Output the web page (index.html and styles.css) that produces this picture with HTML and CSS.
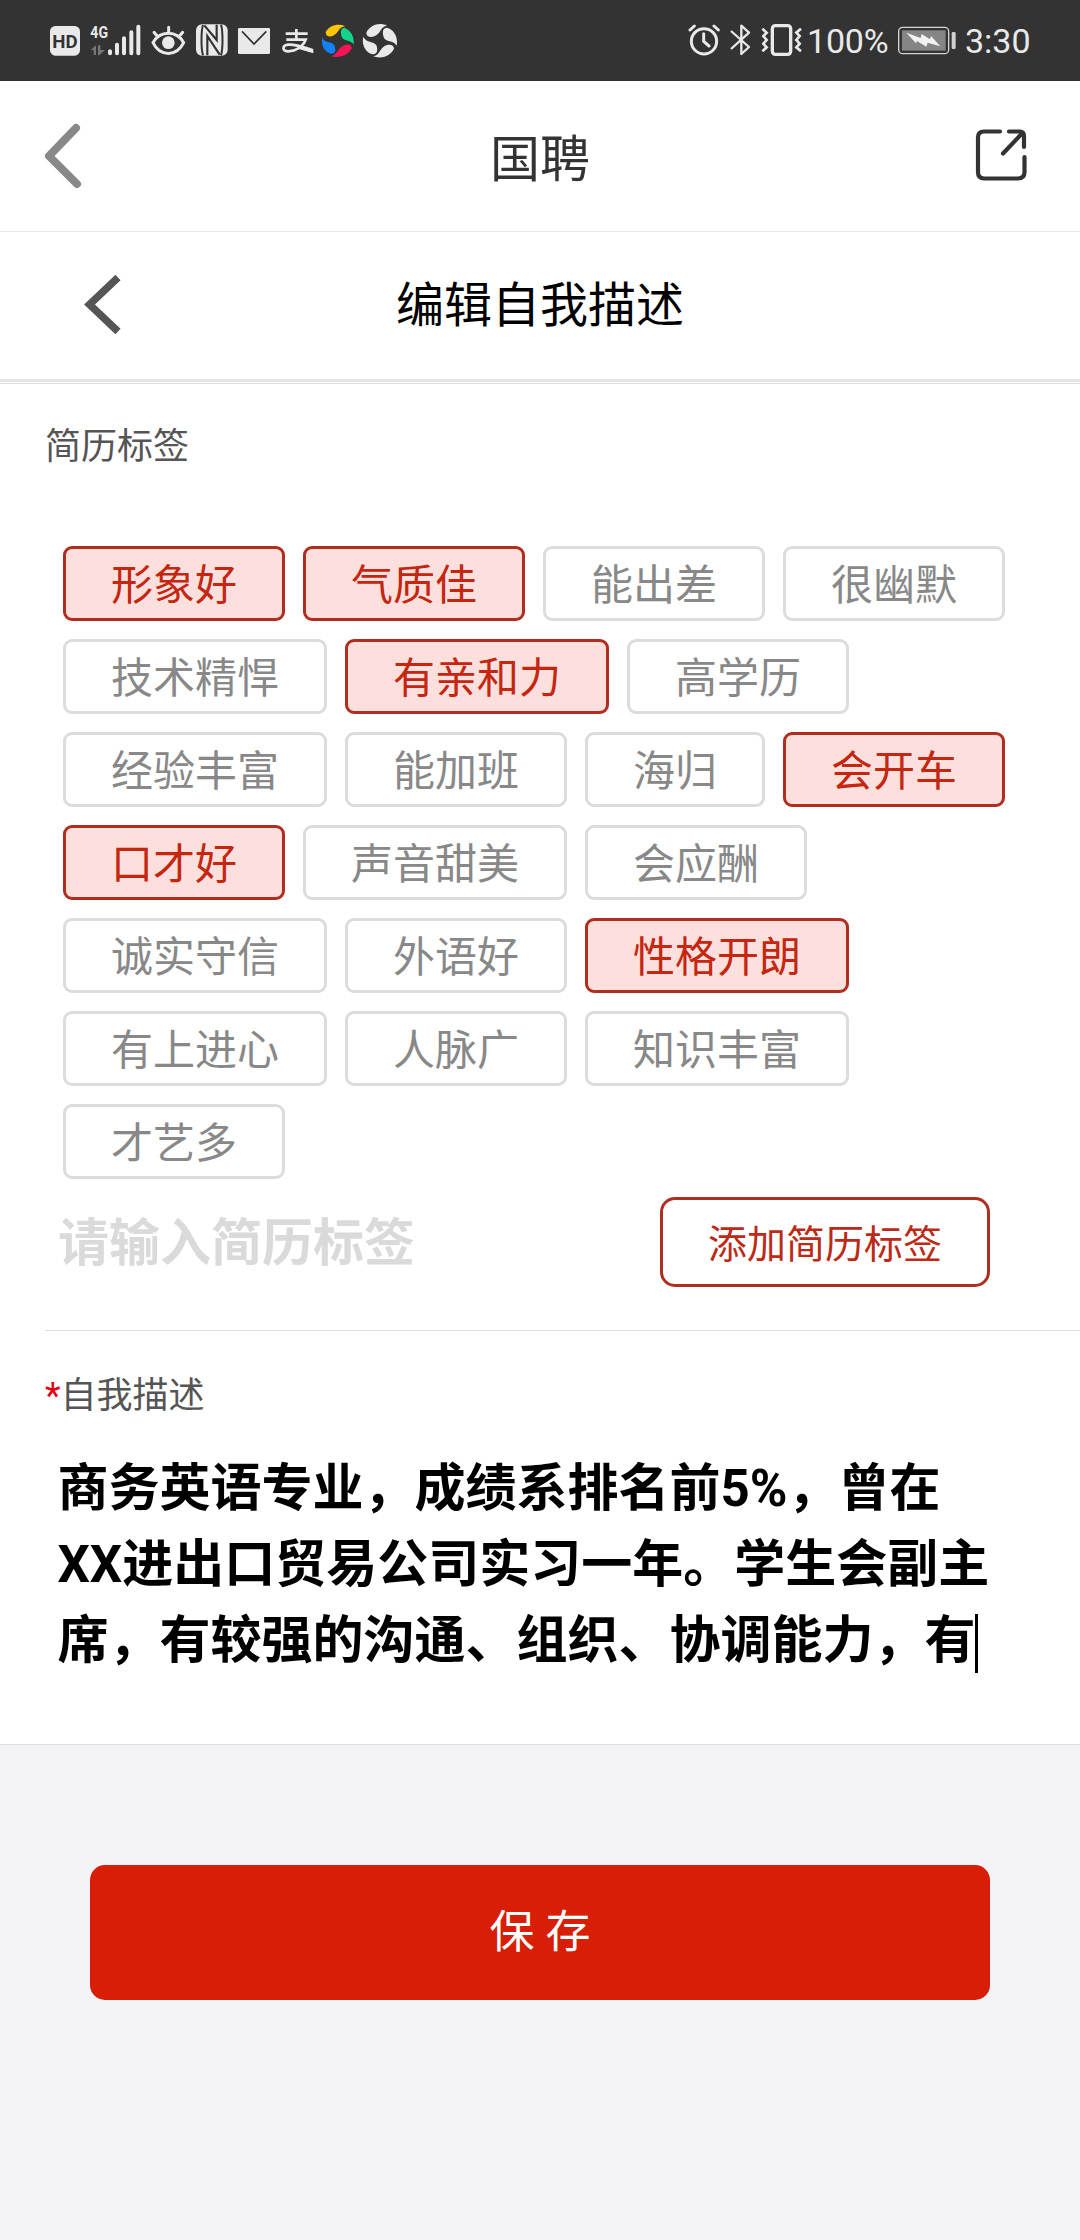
FILE: index.html
```html
<!DOCTYPE html>
<html lang="zh-CN">
<head>
<meta charset="utf-8">
<title>编辑自我描述</title>
<link rel="stylesheet" href="styles.css">
</head>
<body>
<div class="status">
  <div class="status-left">
    <svg width="40" height="81" viewBox="60 0 120 243"><rect x="60" y="78" width="90" height="89" rx="16" fill="#e9e9e9"/><text x="105" y="143" text-anchor="middle" textLength="76" lengthAdjust="spacingAndGlyphs" class="hd">HD</text></svg>
    <svg width="60" height="81" viewBox="180 0 180 243"><text x="181" y="115" textLength="53" lengthAdjust="spacingAndGlyphs" class="net">4G</text><g fill="#777"><path d="M182 150L198 136V165H191V150Z"/><path d="M204 136H211V150H225L208 166H204Z"/></g><g stroke="#e9e9e9" stroke-width="12" stroke-linecap="round"><path d="M240 154V160M261 134V160M282 115V160M304 97V160M325 80V160"/></g></svg>
    <svg width="45" height="81" viewBox="360 0 135 243" fill="none" stroke="#e9e9e9" stroke-width="9" stroke-linecap="round"><path d="M369 128C390 90 440 90 461 128C440 171 390 171 369 128Z"/><circle cx="415" cy="128" r="19" fill="#e9e9e9" stroke="none"/><path d="M416 82V97M372 97L382 109M458 97L448 109"/></svg>
    <svg width="42" height="81" viewBox="495 0 126 243"><rect x="498" y="73" width="95" height="94" rx="18" fill="#e9e9e9"/><path d="M519 75C513 92 513 148 519 166M573 74C579 92 579 148 573 166" fill="none" stroke="#333" stroke-width="6"/><path d="M523 76L560 120V74M532 166V108L569 164" fill="none" stroke="#333" stroke-width="6.500"/></svg>
    <svg width="43" height="81" viewBox="621 0 129 243"><rect x="624" y="84" width="96" height="78" rx="4" fill="#e9e9e9"/><path d="M636 94L672 132L709 94" fill="none" stroke="#333" stroke-width="5"/></svg>
    <svg width="41" height="81" viewBox="750 0 123 243" fill="none" stroke="#e9e9e9"><path d="M767 101H833M799 87V118M769 119H827C820 139 797 154 775 154C755 154 756 136 775 134C799 132 826 144 849 151" stroke-width="8"/><path d="M812 140L850 150V160L806 147Z" fill="#e9e9e9" stroke="none"/></svg>
    <svg width="41" height="81" viewBox="873 0 123 243"><path d="M887 96C900 76 923 69 946 79C925 82 928 96 914 104C903 112 887 112 887 96Z" fill="#fdc600"/><path d="M943 83C964 91 974 113 971 133C960 117 941 125 935 110C932 96 930 85 943 83Z" fill="#12d58a"/><path d="M965 145C954 166 929 175 904 169C924 161 922 149 937 139C950 130 966 132 965 145Z" fill="#ff145a"/><path d="M906 161C884 158 872 136 877 112C883 132 904 122 913 136C918 149 918 160 906 161Z" fill="#1282fa"/></svg>
    <svg width="36" height="81" viewBox="996 0 108 243" fill="#e9e9e9"><path d="M1009 98C1021 75 1047 66 1071 77C1052 80 1053 96 1040 105C1027 114 1009 113 1009 98Z"/><path d="M1071 83C1092 88 1105 112 1100 137C1089 119 1068 129 1061 112C1057 98 1056 85 1071 83Z"/><path d="M1092 146C1081 168 1054 178 1029 169C1050 164 1047 150 1061 140C1073 131 1092 132 1092 146Z"/><path d="M1027 163C1006 157 994 134 1000 110C1009 130 1031 122 1039 136C1045 150 1041 164 1027 163Z"/></svg>
  </div>
  <div class="status-right">
    <svg width="42" height="81" viewBox="54 0 126 243" fill="none" stroke="#e9e9e9" stroke-width="9" stroke-linecap="round"><circle cx="102" cy="124" r="38"/><path d="M101 101V124L117 138M60 90L73 78M132 78L145 90"/></svg>
    <svg width="30" height="81" viewBox="180 0 90 243" fill="none" stroke="#e9e9e9" stroke-width="7" stroke-linejoin="round"><path d="M183 93L237 141L214 162V77L237 98L183 147"/></svg>
    <svg width="43" height="81" viewBox="270 0 129 243" fill="none" stroke="#e9e9e9"><rect x="307" y="77" width="55" height="86" rx="9" stroke-width="10"/><path d="M277 86L290 98L280 108L290 120L280 131L290 142L277 154M393 86L379 98L389 108L379 120L389 131L379 142L393 154" stroke-width="8"/></svg>
    <span class="pct">100%</span>
    <svg width="62" height="81" viewBox="681 0 186 243"><rect x="686" y="82" width="150" height="79" rx="12" fill="none" stroke="#d5d5d5" stroke-width="4"/><rect x="696" y="91" width="131" height="61" fill="#858585"/><path d="M709 98L752 114L755 102L780 118L783 108L811 139L773 128L769 140L741 123L738 130Z" fill="#f2f2f2"/><rect x="845" y="96" width="12" height="51" rx="4" fill="#d0d0d0"/></svg>
    <span class="clock">3:30</span>
  </div>
</div>

<header class="bar app-bar">
  <svg class="app-back" width="40" height="68" viewBox="43 122 40 68" fill="none" stroke="#888" stroke-width="8" stroke-linecap="round" stroke-linejoin="round"><path d="M76 128L49 156L77 184"/></svg>
  <h1>国聘</h1>
  <svg class="share" width="54" height="54" viewBox="974 129 54 54" fill="none" stroke="#333" stroke-width="4.2" stroke-linecap="round" stroke-linejoin="round"><path d="M1000 131.500H984Q978 131.500 978 137.500V172Q978 178.500 984 178.500H1018Q1024.500 178.500 1024.500 172V157M1009 131.500H1020Q1024 131.500 1024 136V147M1022 133.500L1003 153.500"/></svg>
</header>
<header class="bar page-bar">
  <svg class="page-back" width="38" height="61" viewBox="84 275 38 61" fill="none" stroke="#555" stroke-width="7.500"><path d="M118 277.500L89.500 304.500L118 331.500"/></svg>
  <h2>编辑自我描述</h2>
</header>

<main class="form">
  <section class="tags-section">
    <label class="caption">简历标签</label>
    <div class="tags">
      <span class="tag on">形象好</span><span class="tag on">气质佳</span><span class="tag">能出差</span><span class="tag">很幽默</span>
      <span class="tag">技术精悍</span><span class="tag on">有亲和力</span><span class="tag">高学历</span>
      <span class="tag">经验丰富</span><span class="tag">能加班</span><span class="tag">海归</span><span class="tag on">会开车</span>
      <span class="tag on">口才好</span><span class="tag">声音甜美</span><span class="tag">会应酬</span>
      <span class="tag">诚实守信</span><span class="tag">外语好</span><span class="tag on">性格开朗</span>
      <span class="tag">有上进心</span><span class="tag">人脉广</span><span class="tag">知识丰富</span>
      <span class="tag">才艺多</span>
    </div>
    <div class="add-row">
      <span class="placeholder">请输入简历标签</span>
      <button class="add">添加简历标签</button>
    </div>
  </section>
  <section class="about">
    <label class="caption"><span class="star">*</span>自我描述</label>
    <div class="about-text">商务英语专业，成绩系排名前5%，曾在<br>XX进出口贸易公司实习一年。学生会副主<br>席，有较强的沟通、组织、协调能力，有<span class="caret"></span></div>
  </section>
</main>
<footer class="actions"><button class="save">保 存</button></footer>
</body>
</html>
```
FILE: styles.css
```css
* { box-sizing: border-box; }
body {
  margin: 0;
  width: 1080px;
  height: 2240px;
  display: flex;
  flex-direction: column;
  overflow: hidden;
  background: #f4f4f8;
  font-family: Roboto, "Noto Sans CJK SC", sans-serif;
}
svg { display: block; flex: none; }
h1, h2 { margin: 0; font-weight: 400; }
button { margin: 0; padding: 0; font-family: inherit; }

.status {
  height: 81px;
  flex: none;
  display: flex;
  justify-content: space-between;
  padding: 0 51px 0 50px;
  background: #333;
  color: #e9e9e9;
}
.status-left, .status-right { display: flex; }
.status-right { width: 341px; font-size: 34px; line-height: 82px; }
.hd { font: bold 56px Roboto, sans-serif; fill: #333; }
.net { font: bold 50px Roboto, sans-serif; fill: #e9e9e9; }
.pct { flex: none; width: 94px; padding-left: 4px; letter-spacing: -0.2px; white-space: nowrap; }
.clock { flex: none; width: 70px; margin-left: 6px; white-space: nowrap; }

.bar { flex: none; display: flex; align-items: center; background: #fff; }
.bar h1, .bar h2 { flex: 1; text-align: center; }
.app-bar {
  height: 151px;
  padding: 0 52px 0 43px;
  border-bottom: 1px solid #e8e8e8;
}
.app-bar h1 { font-size: 50px; line-height: 60px; color: #333; padding: 8px 0 0 23px; }
.page-bar {
  height: 150px;
  padding: 0 122px 0 84px;
  border-bottom: 3px solid #e4e4e4;
}
.page-bar h2 { font-size: 48px; line-height: 60px; color: #000; }

.form {
  flex: none;
  height: 1362px;
  margin-top: 1px;
  background: #fff;
  border-top: 1px solid #dcdcdc;
  border-bottom: 1px solid #dcdce0;
  box-shadow: 0 -1px #fff;
}
.caption { display: block; font-size: 36px; line-height: 44px; color: #555; }
.tags-section { height: 946px; padding: 41px 0 0 45px; }
.tags { display: flex; flex-wrap: wrap; gap: 18px; width: 978px; padding: 77px 0 0 18px; }
.tag {
  height: 75px;
  padding: 0 45px;
  border: 3px solid #dcdcdc;
  border-radius: 9px;
  font-size: 42px;
  line-height: 74px;
  color: #888;
}
.tag.on { border-color: #b02e20; background: #fde0de; color: #c4260f; }
.add-row { display: flex; justify-content: space-between; padding: 18px 90px 0 13px; }
.placeholder { font-size: 51px; font-weight: 700; line-height: 93px; height: 90px; color: #dadada; }
.add {
  width: 330px;
  height: 90px;
  padding-bottom: 2px;
  border: 3px solid #b02e20;
  border-radius: 15px;
  background: #fff;
  color: #bc2a18;
  font-size: 39px;
}
.about { margin-left: 45px; border-top: 1px solid #dcdcdc; padding-top: 43px; }
.star { color: #e60012; }
.about-text { padding: 33px 0 0 12.5px; font-size: 51px; font-weight: 700; line-height: 76px; color: #000; white-space: nowrap; }
.caret { display: inline-block; width: 3px; height: 59px; margin: -10px 0 -12px -1px; vertical-align: -3px; background: #000; }

.actions { padding: 120px 90px 0; }
.save {
  display: block;
  width: 900px;
  height: 135px;
  padding-bottom: 8px;
  border: 0;
  border-radius: 15px;
  background: #d81e06;
  color: #fff;
  font-size: 45px;
}
```
